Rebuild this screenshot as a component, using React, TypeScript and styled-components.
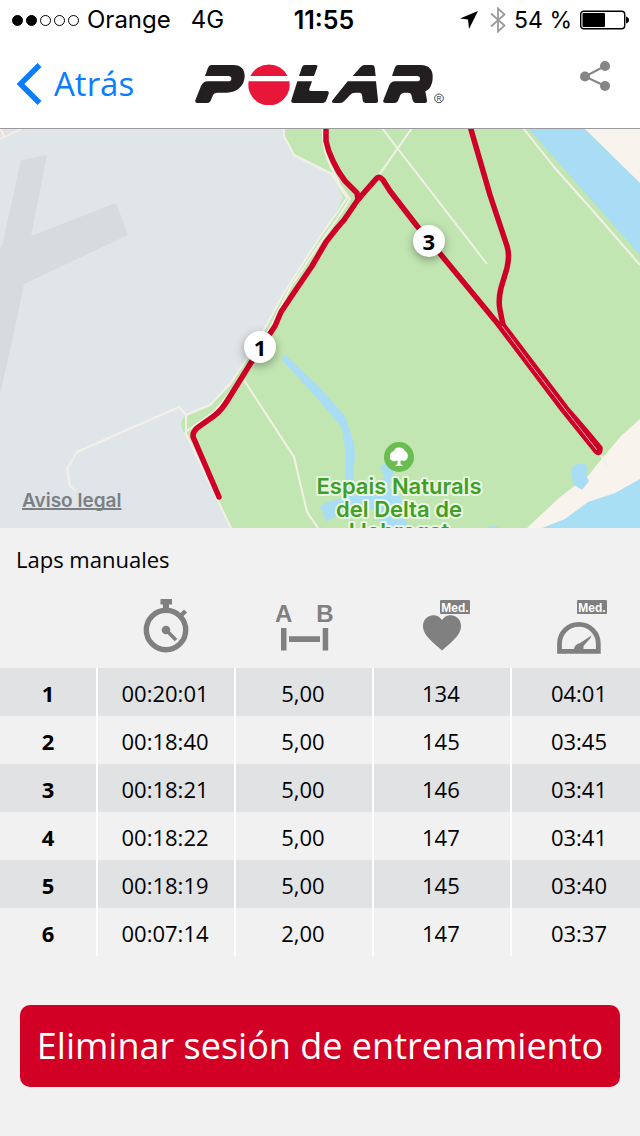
import React from 'react';
import styled, { createGlobalStyle } from 'styled-components';

const GlobalStyle = createGlobalStyle`
  * { box-sizing: border-box; }
  html, body { margin: 0; background: #f1f1f1; }
  body { font-family: 'Open Sans', 'Noto Sans', sans-serif; color: #000; }
  svg { display: block; }
`;

const Screen = styled.div`
  display: flex;
  flex-direction: column;
  min-height: 100vh;
`;

const Header = styled.header`
  position: relative;
  z-index: 1;
  background: #fff;
  box-shadow: 0 1px 0 #9b9b9f;
`;

const StatusBar = styled.div`
  display: grid;
  grid-template-columns: 1fr auto 1fr;
  align-items: center;
  height: 40px;
  padding: 0 4px 0 12px;
  font-family: Inter, 'Liberation Sans', sans-serif;
  font-size: 24px;
  line-height: 40px;
`;

const StatusGroup = styled.div<{ $end?: boolean }>`
  display: flex;
  align-items: center;
  gap: 8px;
  justify-content: ${(p) => (p.$end ? 'flex-end' : 'flex-start')};
  padding-right: ${(p) => (p.$end ? '7px' : '0')};
  white-space: nowrap;
`;

const StatusIcons = styled.div`
  display: flex;
  align-items: center;
  gap: 12px;
`;

const BatteryLevel = styled.span`
  font-size: 23px;
`;

const Network = styled.span`
  margin-left: 12px;
`;

const Clock = styled.time`
  font-size: 25px;
  font-weight: 600;
`;

const Signal = styled.div`
  display: flex;
  gap: 3px;
`;

const Dot = styled.i<{ $on: boolean }>`
  width: 11px;
  height: 11px;
  border: 1px solid #000;
  border-radius: 50%;
  background: ${(p) => (p.$on ? '#000' : 'transparent')};
`;

const NavBar = styled.nav`
  display: grid;
  grid-template-columns: 1fr auto 1fr;
  align-items: center;
  height: 88px;
  padding: 0 16px;
`;

const BackButton = styled.button`
  display: flex;
  align-items: center;
  justify-self: start;
  gap: 12px;
  padding: 0;
  border: 0;
  background: none;
  color: #087dff;
  font: 400 33px/48px 'Open Sans', sans-serif;
  cursor: pointer;
`;

const ShareButton = styled.button`
  justify-self: end;
  padding: 0 14px 16px;
  border: 0;
  background: none;
  color: #858585;
  cursor: pointer;
`;

const MapArea = styled.section`
  position: relative;
  width: 100%;
  aspect-ratio: 640 / 400;
  overflow: hidden;
  > svg { width: 100%; height: 100%; }
`;

const Pin = styled.span<{ $x: number; $y: number }>`
  position: absolute;
  left: ${(p) => p.$x}%;
  top: ${(p) => p.$y}%;
  width: 32px;
  height: 32px;
  margin: -16px 0 0 -16px;
  border-radius: 50%;
  background: #fff;
  box-shadow: 0 3px 10px rgba(0, 0, 0, 0.35);
  font-weight: 700;
  font-size: 22px;
  line-height: 32px;
  text-align: center;
`;

const LegalLink = styled.a`
  position: absolute;
  left: 22px;
  bottom: 16px;
  color: #7b7f84;
  font: 600 19px/22px Inter, sans-serif;
  text-decoration: underline;
  text-decoration-thickness: 2px;
  text-underline-offset: 1px;
  text-decoration-skip-ink: none;
`;

const SectionTitle = styled.h2`
  margin: 0;
  padding: 15px 16px 0;
  font-size: 22px;
  line-height: 32px;
  font-weight: 400;
`;

const LapTable = styled.table`
  width: 100%;
  table-layout: fixed;
  border-collapse: separate;
  border-spacing: 0;
  font-size: 22px;
  line-height: 48px;
  text-align: center;
`;

const LapColumn = styled.col<{ $width: string }>`
  width: ${(p) => p.$width};
`;

const HeadCell = styled.th`
  height: 93px;
  padding: 0 2px 14px 0;
  vertical-align: bottom;
  > svg { margin: 0 auto; }
  &:last-child { padding-left: 8px; }
`;

const LapRow = styled.tr`
  &:nth-child(odd) { background: #e1e2e4; }
  > * {
    height: 48px;
    padding: 2px 0 0;
    line-height: 46px;
    border-right: 2px solid #fff;
  }
  > td { padding-right: 2px; }
  > :last-child {
    padding-left: 8px;
    border-right: 0;
  }
`;

const Footer = styled.footer`
  padding: 49px 20px;
`;

const DeleteButton = styled.button`
  width: 100%;
  height: 82px;
  padding: 0;
  border: 0;
  border-radius: 10px;
  background: #d10024;
  color: #fff;
  font: 400 36px/48px 'Open Sans', sans-serif;
  cursor: pointer;
`;

const iconText = "'Liberation Sans', sans-serif";

const PolarLogo = () => (
  <svg width="250" height="42" viewBox="45 38 750 126" role="img" aria-label="Polar">
    <g fill="#231f20">
      <path d="M94 44H160C184 44 195 58 194 80C192 108 170 127 140 127H112Q102 127 98 136L92 151Q89 158 81 158H52Q44 158 46 150L63 107Q69 93 84 93H145Q154 93 154 85Q154 77 145 77H75L84 52Q87 44 94 44Z" />
      <path d="M375 44H408Q414 44 412 50L402 77H357L366 51Q368 44 375 44Z" />
      <path d="M352 93H396L388 115Q386 122 394 122H440Q448 122 446 130L439 150Q436 158 429 158H341Q332 158 334 150Z" />
      <path d="M554 44H576Q583 44 584 51L587 77H518L542 50Q547 44 554 44Z" />
      <path d="M503 93H588L594 150Q595 158 587 158H556Q549 158 548 150L546 134Q545 127 537 127H526Q516 127 510 134L493 152Q488 158 480 158H463Q452 158 458 149Z" />
      <path d="M655 44H722C748 44 760 60 758 84C757 104 749 118 736 123L741 150Q742 158 734 158H706Q700 158 698 150L694 133Q692 127 684 127H674Q665 127 661 134L654 151Q651 158 643 158H617Q608 158 610 150L627 107Q632 93 645 93H711Q720 93 720 85Q720 77 711 77H636L645 51Q648 44 655 44Z" />
    </g>
    <path fill="#e8173a" d="M211 77A62 61 0 0 1 323 77ZM206 93H328A62 61 0 1 1 206 93Z" />
    <circle cx="777" cy="144" r="13" fill="none" stroke="#231f20" strokeWidth="2.4" />
    <text x="777" y="151" fontSize="19" textAnchor="middle" fill="#231f20" fontFamily="Liberation Sans">R</text>
  </svg>
);

const LocationIcon = () => (
  <svg width="18" height="19" viewBox="0 0 18 19"><path d="M18 0L9 18L8 8.500L0 7.500Z" /></svg>
);

const BluetoothIcon = () => (
  <svg width="16" height="26" viewBox="0 0 16 26" fill="none" stroke="#9a9a9a" strokeWidth="1.8">
    <path d="M1 6.500L14.500 18.500L8 24.500V1.500L14.500 7.500L1 19.500" />
  </svg>
);

const BatteryIcon = () => (
  <svg width="49" height="20" viewBox="0 0 49 20">
    <rect x=".7" y="1.200" width="44" height="17.600" rx="3" fill="none" stroke="#000" strokeWidth="1.400" />
    <rect x="2.500" y="3" width="22.500" height="14" rx="1" />
    <path d="M46 6.500Q49 7.500 49 10Q49 12.500 46 13.500Z" />
  </svg>
);

const ShareIcon = () => (
  <svg width="30" height="30" viewBox="0 0 30 30" fill="currentColor">
    <path d="M25 5L5 15.500L25 25" fill="none" stroke="currentColor" strokeWidth="2" />
    <circle cx="25" cy="5" r="5" /><circle cx="5" cy="15.500" r="5" /><circle cx="25" cy="25" r="5" />
  </svg>
);

const StopwatchIcon = () => (
  <svg width="60" height="56" viewBox="0 0 60 56" fill="#808080" role="img" aria-label="Tiempo">
    <circle cx="30" cy="32" r="19.700" fill="none" stroke="#808080" strokeWidth="5.400" />
    <path d="M24.500 1H36V6.500H33V12H27V6.500H24.500Z" />
    <path d="M43.500 16L48 11.500L51 14.500L46.500 19Z" />
    <circle cx="30" cy="32" r="4.300" />
    <path d="M30 32L40 42" stroke="#808080" strokeWidth="3.600" />
  </svg>
);

const DistanceIcon = () => (
  <svg width="60" height="56" viewBox="0 0 60 56" fill="#808080" role="img" aria-label="Distancia">
    <g fontFamily={iconText} fontSize="24" fontWeight="700" textAnchor="middle">
      <text x="9.700" y="24">A</text>
      <text x="51" y="24">B</text>
    </g>
    <path d="M7 30H12.500V52.500H7ZM48.700 30H54.200V52.500H48.700ZM15 38.300H46V44H15Z" />
  </svg>
);

const AverageBadge = () => (
  <g>
    <rect x="28" y="2" width="30" height="14" rx="1" />
    <text x="43" y="13.500" fill="#fff" fontFamily={iconText} fontSize="12" fontWeight="700" textAnchor="middle">Med.</text>
  </g>
);

const HeartIcon = () => (
  <svg width="60" height="56" viewBox="0 0 60 56" fill="#808080" role="img" aria-label="Frecuencia cardiaca media">
    <path d="M30 22C27 17.500 23 17 20.500 17.300C14.500 18 10.500 23 11 29C11.500 38 22 45 30 52.500C38 45 48.500 38 49 29C49.500 23 45.500 18 39.500 17.300C37 17 33 17.500 30 22Z" />
    <AverageBadge />
  </svg>
);

const GaugeIcon = () => (
  <svg width="60" height="56" viewBox="0 0 60 56" fill="#808080" role="img" aria-label="Ritmo medio">
    <path d="M10.500 53.300V45.500A19.300 19 0 0 1 49.300 45.500V53.300Z" fill="none" stroke="#808080" strokeWidth="4.800" />
    <path d="M25 52Q25 46.500 31 45L42.500 37.500L41.500 40L34.500 48V52Z" />
    <AverageBadge />
  </svg>
);

const MapDrawing = () => (
  <svg viewBox="0 0 640 400" preserveAspectRatio="xMidYMid slice" role="img" aria-label="Mapa de la ruta">
    <rect width="640" height="400" fill="#c2e6b2" />
    <path fill="#e0e5ea" d="M0 0H283V8L294 27L320 40L332 46L343 70L336 84L320 109L284 165L265 200L246 232L232 255L210 277L186 287L181 294L183 302L187 306L231 400H0Z" />
    <path fill="#c2e6b2" d="M186 287Q179 294 183 303L187 307L222 280L235 262L210 277Z" />
    <path fill="#d6dbdf" d="M21 32L47 27L31 108L116 75L128 107L24 156L15 200L0 266V120L2 118Z" />
    <path fill="#e4e2e2" d="M0 0H22L0 11Z" />
    <g fill="#a9dcf5">
      <path d="M528 0H584L640 55V127Z" />
      <path d="M281 231L286 227L320 260L345 288L354 315L355 330L353 347L355 362L372 357L385 350L380 338L387 335L394 343L389 360L402 370L400 384L410 400H383L375 382L350 378L327 394L320 378L328 374L344 370L346 326L342 300L318 271Z" />
      <path d="M487 400Q493 396 500 400Z" />
    </g>
    <path fill="#f8f4ed" d="M584 0H640V55Z" />
    <path fill="#f8f4ed" d="M640 291L621 308L600 333L588 348L560 369L527 400H640Z" />
    <path fill="#a9dff5" d="M640 351L615 365L588 374L565 391L542 400H640Z" />
    <path fill="#a9dcf5" d="M571 341L574 337L584 335L588 341L586 347L589 353L582 362L573 356Z" />
    <g fill="none" stroke="#f3f0e8" strokeWidth="2" strokeLinejoin="round">
      <path d="M284 0V8L294 27L320 40L332 46L342 63L347 70L336 86L320 109L284 165L265 200L246 232L230 256L210 277L186 287V306L231 400" />
      <path d="M323 0Q322 20 330 37L340 57L350 71L337 91L318 118L290 160L270 200L252 232L232 262L215 283L187 303" />
      <path d="M186 287L179 279L77 324L67 341L70 358L76 363" />
      <path d="M244 252L294 329L307 384L318 400" />
      <path d="M382 0L398 21L487 136M412 0L379 47" />
      <path d="M523 0L554 39L594 84L640 137" />
      <path d="M600 326L608 338M0 11L23 0M0 0L4 8" />
    </g>
    <g fill="none" stroke="#ce0027" strokeWidth="5.500" strokeLinecap="round" strokeLinejoin="round">
      <path d="M219 369L194 311Q191 306 197 300L214 288Q222 282 229 270L252 233L275 198L281 184L293 166L312 138L326 114L337 100L344 92L357 73L362 67L376 51Q379 47 383 52L390 63L417 98L442 128L498 196L563 282L596 323Q600 327 600 320L585 302L566 280L503 197" />
      <path d="M326 -2V13Q328 23 333 33Q338 44 345 53L357 65L358 71" />
      <path d="M470 -2L490 67L507 118Q510 127 507 140L501 160Q498 172 500 182L503 197" />
    </g>
    <path d="M502 198L531 237L564 280L597 322" fill="none" stroke="#f0b4ae" strokeWidth="1" />
    <circle cx="399" cy="329" r="15" fill="#6cbd51" />
    <path fill="#fff" d="M397.500 332H400.500V336L403 338H395L397.500 336ZM393 333Q389 332 390 328Q390 324 394 323Q395 319 399 319.500Q403 319 405 323Q409 326 407.500 330Q406 334 402 332.500H396Q395 334 393 333Z" />
    <g fontFamily="Inter, sans-serif" fontSize="22" fontWeight="600" textAnchor="middle" fill="#419f28" stroke="#e9f7e2" strokeWidth="4" strokeLinejoin="round" paintOrder="stroke">
      <text x="399" y="366">Espais Naturals</text>
      <text x="399" y="389">del Delta de</text>
      <text x="399" y="411">Llobregat</text>
    </g>
  </svg>
);

const pins = [
  { label: '1', x: 40.625, y: 54.75 },
  { label: '3', x: 67, y: 28.25 },
];

const laps = [
  ['1', '00:20:01', '5,00', '134', '04:01'],
  ['2', '00:18:40', '5,00', '145', '03:45'],
  ['3', '00:18:21', '5,00', '146', '03:41'],
  ['4', '00:18:22', '5,00', '147', '03:41'],
  ['5', '00:18:19', '5,00', '145', '03:40'],
  ['6', '00:07:14', '2,00', '147', '03:37'],
];

const columnWidths = ['15.3%', '21.6%', '21.5%', '21.6%', '20%'];

export default function App() {
  return (
    <Screen>
      <GlobalStyle />
      <Header>
        <StatusBar>
          <StatusGroup>
            <Signal>
              {[true, true, false, false, false].map((on, i) => <Dot key={i} $on={on} />)}
            </Signal>
            <span>Orange</span>
            <Network>4G</Network>
          </StatusGroup>
          <Clock>11:55</Clock>
          <StatusGroup $end>
            <StatusIcons>
              <LocationIcon />
              <BluetoothIcon />
            </StatusIcons>
            <BatteryLevel>54 %</BatteryLevel>
            <BatteryIcon />
          </StatusGroup>
        </StatusBar>
        <NavBar>
          <BackButton type="button">
            <svg width="26" height="42" viewBox="0 0 26 42" fill="none" stroke="currentColor" strokeWidth="5.500">
              <path d="M23.500 2L4.500 21L23.500 40" />
            </svg>
            Atrás
          </BackButton>
          <PolarLogo />
          <ShareButton type="button" aria-label="Compartir"><ShareIcon /></ShareButton>
        </NavBar>
      </Header>
      <MapArea>
        <MapDrawing />
        {pins.map((pin) => <Pin key={pin.label} $x={pin.x} $y={pin.y}>{pin.label}</Pin>)}
        <LegalLink href="#legal">Aviso legal</LegalLink>
      </MapArea>
      <main>
        <SectionTitle id="laps-title">Laps manuales</SectionTitle>
        <LapTable aria-labelledby="laps-title">
          <colgroup>
            {columnWidths.map((width, i) => <LapColumn key={i} $width={width} />)}
          </colgroup>
          <thead>
            <tr>
              <HeadCell />
              <HeadCell scope="col"><StopwatchIcon /></HeadCell>
              <HeadCell scope="col"><DistanceIcon /></HeadCell>
              <HeadCell scope="col"><HeartIcon /></HeadCell>
              <HeadCell scope="col"><GaugeIcon /></HeadCell>
            </tr>
          </thead>
          <tbody>
            {laps.map(([lap, ...values]) => (
              <LapRow key={lap}>
                <th scope="row">{lap}</th>
                {values.map((value, i) => <td key={i}>{value}</td>)}
              </LapRow>
            ))}
          </tbody>
        </LapTable>
      </main>
      <Footer>
        <DeleteButton type="button">Eliminar sesión de entrenamiento</DeleteButton>
      </Footer>
    </Screen>
  );
}
